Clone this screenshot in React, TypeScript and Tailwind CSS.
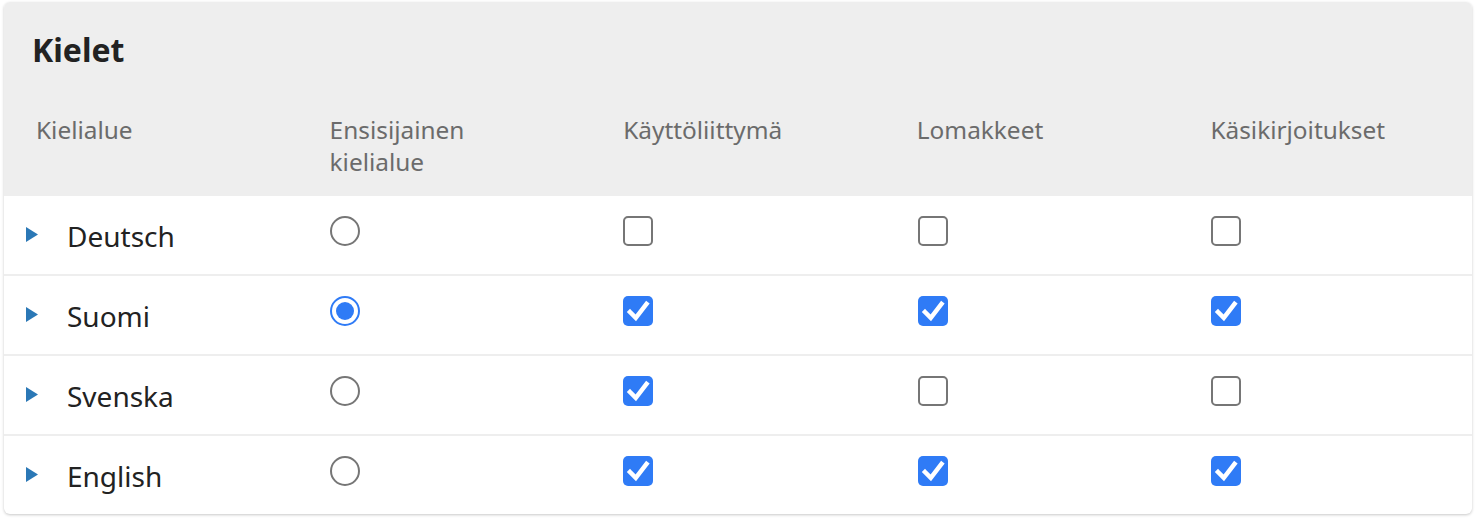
const columns = ["Kielialue", "Ensisijainen kielialue", "Käyttöliittymä", "Lomakkeet", "Käsikirjoitukset"]

const rows = [
  { name: "Deutsch", primary: false, ui: false, forms: false, scripts: false },
  { name: "Suomi", primary: true, ui: true, forms: true, scripts: true },
  { name: "Svenska", primary: false, ui: true, forms: false, scripts: false },
  { name: "English", primary: false, ui: true, forms: true, scripts: true },
]

function Radio({ checked }: { checked: boolean }) {
  if (checked) {
    return (
      <span className="mb-2 flex h-[30px] w-[30px] items-center justify-center rounded-full border-2 border-[#2f7bf6] bg-white">
        <span className="h-[18px] w-[18px] rounded-full bg-[#2f7bf6]" />
      </span>
    )
  }
  return <span className="mb-2 block h-[30px] w-[30px] rounded-full border-2 border-[#767676] bg-white" />
}

function Checkbox({ checked }: { checked: boolean }) {
  if (checked) {
    return (
      <span className="mb-2 flex h-[30px] w-[30px] items-center justify-center rounded-[5px] bg-[#2f7bf6]">
        <svg viewBox="0 0 30 30" className="h-[30px] w-[30px]">
          <path d="M7 16 L12.8 21.8 L23.5 8" fill="none" stroke="white" strokeWidth="4.5" strokeLinecap="square" />
        </svg>
      </span>
    )
  }
  return <span className="mb-2 block h-[30px] w-[30px] rounded-[5px] border-2 border-[#767676] bg-white" />
}

export default function App() {
  return (
    <main className="min-h-screen bg-white font-['Noto_Sans','Open_Sans',sans-serif]">
      <div className="ml-[4px] mt-[2px] w-[1468px] overflow-hidden rounded-[6px] bg-white shadow-[0_1px_3px_rgba(0,0,0,0.22)]">
        {/* header */}
        <div className="bg-[#eeeeee] pt-[28px] pb-[18px]">
          <h2 className="pl-[28px] text-[32px] leading-[40px] font-bold text-[#222222]">Kielet</h2>
          <div className="mt-[44px] grid grid-cols-5">
            {columns.map((c) => (
              <div key={c} className="pl-[32px] pr-[60px] text-[24.4px] leading-[32px] text-[#6b6b6b]">
                {c}
              </div>
            ))}
          </div>
        </div>

        {/* rows */}
        {rows.map((r, i) => (
          <div
            key={r.name}
            className={`grid h-[78px] grid-cols-5 items-center ${i > 0 ? "border-t-2 border-[#eeeeee]" : ""} box-content`}
          >
            <div className="flex items-center pl-[22px]">
              <svg viewBox="0 0 12 15" className="mb-[2px] h-[15px] w-[12px]">
                <path d="M0 0 L12 7.5 L0 15 Z" fill="#2b78b6" />
              </svg>
              <span className="ml-[29px] mt-[2px] text-[28px] leading-[36px] text-[#222222]">{r.name}</span>
            </div>
            <div className="pl-[32px]">
              <Radio checked={r.primary} />
            </div>
            <div className="pl-[32px]">
              <Checkbox checked={r.ui} />
            </div>
            <div className="pl-[33px]">
              <Checkbox checked={r.forms} />
            </div>
            <div className="pl-[33px]">
              <Checkbox checked={r.scripts} />
            </div>
          </div>
        ))}
      </div>
    </main>
  )
}
